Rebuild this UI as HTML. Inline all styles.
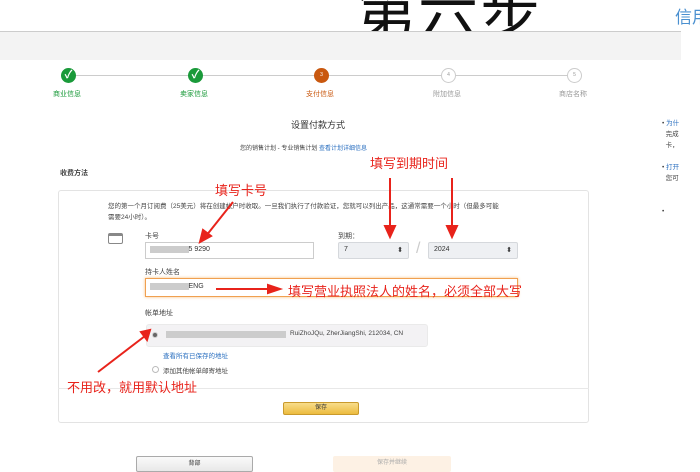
<!DOCTYPE html>
<html><head><meta charset="utf-8"><style>
*{margin:0;padding:0;box-sizing:border-box}
body{width:700px;height:470px;overflow:hidden;background:#fff;font-family:"Liberation Sans","Noto Sans CJK SC",sans-serif;position:relative;color:#333}
.a{position:absolute;white-space:nowrap}
.s{font-size:7px;color:#444}
.c{position:absolute;width:15px;height:15px;border-radius:50%;top:68px}
.g{background:#1a9a3a;color:#fff;font-size:11px;text-align:center;line-height:15px;font-weight:bold}
.e{border:1px solid #ccc;background:#fff;font-size:5px;color:#999;text-align:center;line-height:13px}
.r{color:#e8231b;font-size:13px}
.sel{position:absolute;background:#eef0f3;border:1px solid #d5d8dc;border-radius:2px;font-size:7px;padding:3px 5px;height:17px}
</style></head><body>
<div class="a" style="left:356px;top:-34px;font-size:60px;color:#111;font-family:'Noto Sans CJK SC',sans-serif;letter-spacing:2px">第六步</div>
<div class="a" style="left:675px;top:3px;font-size:17px;color:#4a90d0;font-family:'Noto Sans CJK SC',sans-serif">信用</div>
<div class="a" style="left:0;top:31px;width:681px;height:29px;background:#f3f3f3;border-top:1px solid #ccc"></div>
<div class="a" style="left:75px;top:75px;width:500px;height:1px;background:#ccc"></div>
<div class="c g" style="left:61px">✓</div>
<div class="c g" style="left:188px">✓</div>
<div class="c" style="left:314px;background:#c9580f;color:#fff;font-size:5px;text-align:center;line-height:15px">3</div>
<div class="c e" style="left:441px">4</div>
<div class="c e" style="left:567px">5</div>
<div class="a s" style="left:53px;top:89px;color:#1a9a3a">商业信息</div>
<div class="a s" style="left:180px;top:89px;color:#1a9a3a">卖家信息</div>
<div class="a s" style="left:306px;top:89px;color:#c9580f">支付信息</div>
<div class="a s" style="left:433px;top:89px;color:#999">附加信息</div>
<div class="a s" style="left:559px;top:89px;color:#999">商店名称</div>
<div class="a" style="left:291px;top:118px;font-size:9px">设置付款方式</div>
<div class="a s" style="left:240px;top:143px;font-size:6px">您的销售计划 - 专业销售计划 <span style="color:#2a6fc0">查看计划详细信息</span></div>
<div class="a s" style="left:60px;top:168px;font-weight:bold">收费方法</div>
<div class="a s" style="left:662px;top:118px;line-height:11px;font-size:6.5px">• <span style="color:#2a6fc0">为什</span><br>&nbsp;&nbsp;完成<br>&nbsp;&nbsp;卡，<br><br>• <span style="color:#2a6fc0">打开</span><br>&nbsp;&nbsp;您可<br><br><br>•</div>
<div class="a" style="left:58px;top:190px;width:531px;height:233px;border:1px solid #e3e3e3;border-radius:3px"></div>
<div class="a s" style="left:108px;top:201px;font-size:6.5px;line-height:11px">您的第一个月订阅费（25美元）将在创建帐户时收取。一旦我们执行了付款验证，您就可以列出产品，这通常需要一个小时（但最多可能<br>需要24小时）。</div>
<div class="a" style="left:108px;top:233px;width:15px;height:11px;border:1px solid #888;border-radius:2px;border-top-width:3px"></div>
<div class="a s" style="left:145px;top:231px">卡号</div>
<div class="a" style="left:145px;top:242px;width:169px;height:17px;border:1px solid #ccc;font-size:7px;padding:3px 4px"><span style="background:#ccc;color:#ccc">xxxxxxxxxxx</span>5 9290</div>
<div class="a s" style="left:338px;top:231px">到期：</div>
<div class="sel" style="left:338px;top:242px;width:71px">7<span style="float:right">⬍</span></div>
<div class="a" style="left:416px;top:240px;font-size:16px;color:#ccc">/</div>
<div class="sel" style="left:428px;top:242px;width:90px">2024<span style="float:right">⬍</span></div>
<div class="a s" style="left:145px;top:267px">持卡人姓名</div>
<div class="a" style="left:145px;top:278px;width:373px;height:19px;border:1px solid #f0a050;box-shadow:0 0 3px #f5c080;font-size:7px;padding:4px 4px"><span style="background:#ccc;color:#ccc">xxxxxxxxxxx</span>ENG</div>
<div class="a s" style="left:145px;top:308px">帐单地址</div>
<div class="a" style="left:146px;top:324px;width:282px;height:23px;background:#f3f2f4;border-radius:3px;border:1px solid #eaeaea"></div>
<div class="a" style="left:152px;top:332px;width:6px;height:6px;border-radius:50%;background:#666;border:1px solid #ccc"></div>
<div class="a" style="left:166px;top:331px;width:120px;height:7px;background:#ccc"></div>
<div class="a s" style="left:290px;top:330px;font-size:6.5px">RuiZhoJQu, ZherJiangShi, 212034, CN</div>
<div class="a s" style="left:163px;top:350px;color:#2a6fc0;font-size:6.5px">查看所有已保存的地址</div>
<div class="a" style="left:152px;top:366px;width:7px;height:7px;border-radius:50%;border:1px solid #bbb"></div>
<div class="a s" style="left:163px;top:365px;font-size:6.5px">添加其他帐单邮寄地址</div>
<div class="a" style="left:58px;top:388px;width:531px;height:1px;background:#e8e8e8"></div>
<div class="a" style="left:283px;top:402px;width:76px;height:13px;background:linear-gradient(#f8dc8a,#ecbb3f);border:1px solid #c99a2c;border-radius:2px;font-size:6px;text-align:center;line-height:11px">保存</div>
<div class="a" style="left:136px;top:456px;width:117px;height:16px;background:linear-gradient(#fafafa,#e8e8e8);border:1px solid #aaa;border-radius:2px;font-size:6px;text-align:center;line-height:14px">背部</div>
<div class="a" style="left:333px;top:456px;width:118px;height:16px;background:#fdf1e4;border-radius:2px;font-size:6px;color:#aaa;text-align:center;line-height:14px">保存并继续</div>
<div class="a r" style="left:215px;top:180px">填写卡号</div>
<div class="a r" style="left:370px;top:153px">填写到期时间</div>
<div class="a r" style="left:288px;top:281px">填写营业执照法人的姓名，必须全部大写</div>
<div class="a r" style="left:67px;top:377px">不用改，就用默认地址</div>
<svg class="a" style="left:0;top:0" width="700" height="470"><g stroke="#e8231b" stroke-width="2" fill="#e8231b">
<line x1="233" y1="202" x2="206" y2="236"/><polygon points="200,242 203,230 211,236"/>
<line x1="390" y1="178" x2="390" y2="228"/><polygon points="385,226 395,226 390,237"/>
<line x1="452" y1="178" x2="452" y2="228"/><polygon points="447,226 457,226 452,237"/>
<line x1="216" y1="289" x2="270" y2="289"/><polygon points="268,285 268,293 280,289"/>
<line x1="98" y1="372" x2="145" y2="336"/><polygon points="150,330 141,332 147,340"/>
</g></svg>
</body></html>
